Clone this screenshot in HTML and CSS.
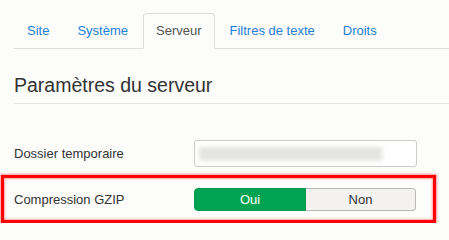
FILE: index.html
```html
<!DOCTYPE html>
<html lang="fr">
<head>
<meta charset="utf-8">
<title>Paramètres du serveur</title>
<link rel="stylesheet" href="styles.css">
</head>
<body>
<div class="page">
  <ul class="tabs">
    <li><a href="#">Site</a></li>
    <li><a href="#">Système</a></li>
    <li class="active"><a href="#">Serveur</a></li>
    <li><a href="#">Filtres de texte</a></li>
    <li><a href="#">Droits</a></li>
  </ul>
  <h2 class="legend">Paramètres du serveur</h2>
  <div class="row">
    <label class="label">Dossier temporaire</label>
    <div class="input"><span class="blurred"></span></div>
  </div>
  <div class="row highlight">
    <label class="label">Compression GZIP</label>
    <div class="toggle">
      <span class="opt yes">Oui</span>
      <span class="opt no">Non</span>
    </div>
  </div>
</div>
</body>
</html>
```
FILE: styles.css
```css
html, body {
  margin: 0;
  padding: 0;
  background: #fcfcfa;
}
body {
  font-family: "Liberation Sans", Arial, sans-serif;
  font-size: 13px;
  color: #333;
}
.page {
  padding: 13px 0 0 14px;
}
.tabs {
  list-style: none;
  margin: 0;
  padding: 0;
  display: flex;
  border-bottom: 1px solid #dddddb;
}
.tabs li {
  margin-right: 2px;
  margin-bottom: -1px;
}
.tabs a {
  display: block;
  padding: 8px 12px;
  line-height: 18px;
  color: #1f7fd6;
  text-decoration: none;
  border: 1px solid transparent;
  border-radius: 4px 4px 0 0;
}
.tabs .active a {
  color: #555;
  background: #fcfcfa;
  border-color: #dddddb;
  border-bottom-color: transparent;
}
.legend {
  margin: 18px 0 0;
  font-size: 19.5px;
  font-weight: normal;
  line-height: 36px;
  color: #333;
  border-bottom: 1px solid #e5e5e3;
}
.row {
  display: flex;
  align-items: center;
}
.legend + .row {
  margin-top: 36px;
}
.label {
  width: 180px;
  flex: none;
}
.input {
  width: 217px;
  height: 25px;
  border: 1px solid #cccccc;
  border-radius: 3px;
  background: #fff;
  display: flex;
  align-items: center;
  padding-left: 4px;
}
.blurred {
  display: block;
  width: 183px;
  height: 14px;
  background: #e4e4e2;
  filter: blur(2px);
}
.highlight {
  margin: 8px 13px 0 -13px;
  padding: 10px 0 9px 10px;
  border: 3px solid #ff0000;
  box-shadow: 0 0 2px 1px rgba(255, 80, 80, 0.6), inset 0 0 2px 1px rgba(255, 80, 80, 0.5);
}
.toggle {
  display: flex;
  height: 23px;
}
.opt {
  display: flex;
  align-items: center;
  justify-content: center;
  font-size: 13px;
}
.yes {
  width: 112px;
  background: #00a352;
  color: #fff;
  border: 1px solid #009a4d;
  border-radius: 4px 0 0 4px;
  box-sizing: border-box;
}
.no {
  width: 110px;
  background: #f3f2f0;
  color: #333;
  border: 1px solid #b9b9b7;
  border-left: none;
  border-radius: 0 4px 4px 0;
  box-sizing: border-box;
}
```
